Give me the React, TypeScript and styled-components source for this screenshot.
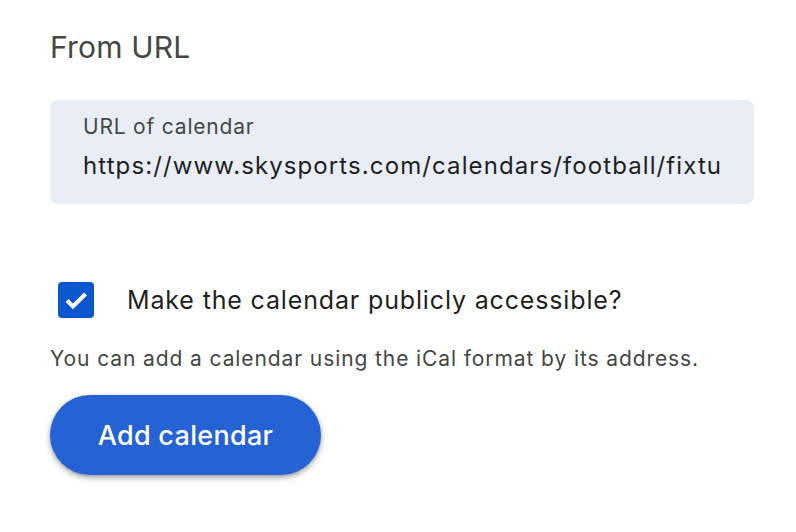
import styled, { createGlobalStyle } from 'styled-components';

const GlobalStyle = createGlobalStyle`
  body {
    margin: 0;
    background: #ffffff;
    font-family: Inter, Roboto, Arial, sans-serif;
  }
`;

const Page = styled.div`
  width: 796px;
  height: 532px;
  box-sizing: border-box;
  padding: 28px 42px 0 50px;
  display: flex;
  flex-direction: column;
  align-items: flex-start;
`;

const Heading = styled.h2`
  margin: 0;
  font-size: 30px;
  font-weight: 400;
  line-height: 38px;
  letter-spacing: 0.2px;
  color: #444746;
`;

const Field = styled.div`
  margin-top: 34px;
  width: 704px;
  height: 104px;
  box-sizing: border-box;
  padding: 13px 20px 0 33px;
  background: #e9edf6;
  border-radius: 8px;
  overflow: hidden;
`;

const FieldLabel = styled.div`
  font-size: 21px;
  line-height: 28px;
  letter-spacing: 0.8px;
  color: #444746;
`;

const FieldValue = styled.div`
  margin-top: 9px;
  font-size: 24px;
  line-height: 32px;
  letter-spacing: 1.1px;
  color: #1f1f1f;
  white-space: nowrap;
`;

const CheckRow = styled.label`
  margin-top: 78px;
  display: flex;
  align-items: center;
  gap: 33px;
  padding-left: 8px;
  font-size: 25px;
  letter-spacing: 0.85px;
  color: #1f1f1f;
`;

const Box = styled.span<{ checked: boolean }>`
  width: 36px;
  height: 36px;
  border-radius: 4px;
  background: ${({ checked }) => (checked ? '#0b57d0' : 'transparent')};
  display: flex;
`;

const Helper = styled.p`
  margin: 27px 0 0;
  font-size: 21px;
  line-height: 28px;
  letter-spacing: 0.9px;
  color: #444746;
`;

const AddButton = styled.button`
  margin-top: 22px;
  width: 271px;
  height: 80px;
  border: none;
  border-radius: 40px;
  background: #2563d4;
  color: #ffffff;
  font-family: inherit;
  font-size: 27px;
  font-weight: 500;
  letter-spacing: 0.3px;
  box-shadow: 0 2px 4px rgba(0, 0, 0, 0.3), 0 3px 8px rgba(0, 0, 0, 0.15);
`;

export default function App() {
  return (
    <>
      <GlobalStyle />
      <Page>
        <Heading>From URL</Heading>
        <Field>
          <FieldLabel>URL of calendar</FieldLabel>
          <FieldValue>https://www.skysports.com/calendars/football/fixtu</FieldValue>
        </Field>
        <CheckRow>
          <Box checked>
            <svg width="36" height="36" viewBox="0 0 36 36">
              <polyline points="9,18.5 15,24.5 27.5,12" fill="none" stroke="#fff" strokeWidth="4" />
            </svg>
          </Box>
          Make the calendar publicly accessible?
        </CheckRow>
        <Helper>You can add a calendar using the iCal format by its address.</Helper>
        <AddButton>Add calendar</AddButton>
      </Page>
    </>
  );
}
